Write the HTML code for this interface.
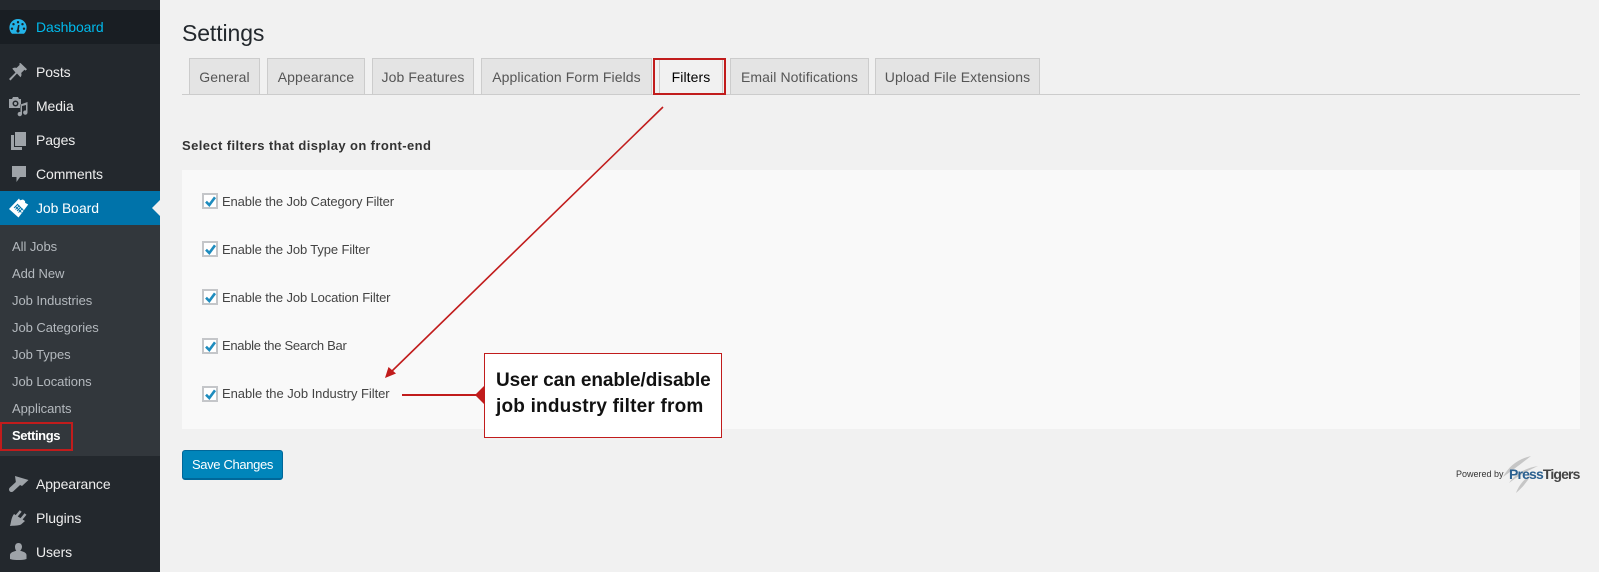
<!DOCTYPE html>
<html><head><meta charset="utf-8"><style>
*{box-sizing:border-box}
html,body{margin:0;padding:0;width:1599px;height:572px;overflow:hidden;background:#f1f1f1;font-family:"Liberation Sans",sans-serif}
.a{position:absolute;white-space:nowrap}
.m{left:36px;font-size:14px;color:#eee;line-height:20px;letter-spacing:-.1px}
.s{left:12px;font-size:13px;color:#b4b9be;line-height:18px;letter-spacing:-.05px}
.t{top:58px;height:36px;background:#e4e4e4;border:1px solid #ccc;border-bottom:none;color:#555;font-size:14px;font-weight:400;line-height:36px;text-align:center;letter-spacing:.1px}
.c{left:202px;width:16px;height:16px;background:#fff;border:2px solid #c4c6c9}
.l{left:222px;font-size:13px;color:#444;line-height:18px;letter-spacing:-.12px}
svg{position:absolute;overflow:visible}
</style></head><body>
<div class="a" style="left:0;top:0;width:160px;height:572px;background:#23282d"></div>
<div class="a" style="left:0;top:10px;width:160px;height:34px;background:#191e23"></div>
<div class="a" style="left:0;top:191px;width:160px;height:34px;background:#0073aa"></div>
<div class="a" style="left:0;top:225px;width:160px;height:231px;background:#32373c"></div>
<div class="a" style="left:152px;top:200px;width:0;height:0;border:8px solid transparent;border-right-color:#f1f1f1;border-left:none"></div>

<svg style="left:9px;top:18px" width="18" height="18" viewBox="0 0 18 18"><path fill="#23b3e8" fill-rule="evenodd" d="M9 1a8.6 8.6 0 0 0-8.6 8.6c0 2.4 1 4.600 2.600 6.200h12c1.600-1.600 2.600-3.800 2.600-6.200A8.600 8.600 0 0 0 9 1zM9 3a1.200 1.200 0 1 1 0 2.400A1.200 1.200 0 0 1 9 3zM4.500 5a1.200 1.200 0 1 1 0 2.400 1.200 1.200 0 0 1 0-2.400zM13.500 5a1.200 1.200 0 1 1 0 2.400 1.200 1.200 0 0 1 0-2.400zM3 9.500a1.200 1.200 0 1 1 0 2.400 1.200 1.200 0 0 1 0-2.400zM15 9.500a1.200 1.200 0 1 1 0 2.400 1.200 1.200 0 0 1 0-2.400zM10.500 7l-.6 4.800a1.500 1.500 0 1 1-1.800 0L9 7z"/></svg>
<div class="a m" style="top:17px;color:#00b9eb">Dashboard</div>

<svg style="left:9px;top:63px" width="18" height="18" viewBox="0 0 18 18"><path fill="#9ea3a8" d="M11.500 0l6.500 6.300-1.500 1.300-1-.8-3.300 3.200c.6 1.500.3 3.100-.7 4.200L8 10.500 1.500 17.500 0 16l6.500-6.500-3.200-3.900c1.200-1.100 2.900-1.300 4.300-.7l3.200-3.200-.8-1z"/></svg>
<div class="a m" style="top:62px">Posts</div>

<svg style="left:9px;top:97px" width="19" height="19" viewBox="0 0 19 19"><path fill="#9ea3a8" fill-rule="evenodd" d="M0 2h3l1-2h5l1 2h2v9H0zM6.500 3.500a3 3 0 1 0 0 6 3 3 0 0 0 0-6zM18.500 5v10.500a2.200 2.200 0 1 1-1.500-2V8l-4 1v8a2.200 2.200 0 1 1-1.500-2v-7.500zM6.500 5a1.500 1.500 0 1 1 0 3 1.500 1.500 0 0 1 0-3z"/></svg>
<div class="a m" style="top:96px">Media</div>

<svg style="left:11px;top:132px" width="16" height="18" viewBox="0 0 16 18"><path fill="#9ea3a8" d="M4 0h11v14H4zM0 3h3v12h8v3H0z"/></svg>
<div class="a m" style="top:130px">Pages</div>

<svg style="left:11px;top:166px" width="16" height="16" viewBox="0 0 16 16"><path fill="#9ea3a8" d="M1 0h14v11h-6l-3.500 5v-5H1z"/></svg>
<div class="a m" style="top:164px">Comments</div>

<svg style="left:9px;top:198px" width="20" height="20" viewBox="0 0 20 20"><path fill="#fff" d="M10 .5l1 1.800 3-.8 2 1.500.2 1.900 3 1.600L9.500 19.500 0 11z"/><path stroke="#0073aa" stroke-width=".9" fill="none" d="M5 10l4-4M6.500 11.500l4-4M8 13l4-4M9.500 14.500l4-4M6.500 8.500l6 6M8.500 6.500l6 6"/></svg>
<div class="a m" style="top:198px;color:#fff">Job Board</div>

<div class="a s" style="top:238px">All Jobs</div>
<div class="a s" style="top:265px">Add New</div>
<div class="a s" style="top:292px">Job Industries</div>
<div class="a s" style="top:319px">Job Categories</div>
<div class="a s" style="top:346px">Job Types</div>
<div class="a s" style="top:373px">Job Locations</div>
<div class="a s" style="top:400px">Applicants</div>
<div class="a s" style="top:427px;color:#fff;font-weight:700;letter-spacing:-.4px">Settings</div>
<div class="a" style="left:0;top:422px;width:73px;height:29px;border:2px solid #c11c1c"></div>

<svg style="left:9px;top:475px" width="20" height="17" viewBox="0 0 20 17"><path fill="#9ea3a8" d="M6 1l13.500 4-6.500 6-6-3z"/><path stroke="#9ea3a8" stroke-width="5" stroke-linecap="round" d="M9 8.500L2.500 14.500"/></svg>
<div class="a m" style="top:474px">Appearance</div>

<svg style="left:10px;top:510px" width="17" height="17" viewBox="0 0 17 17"><path fill="#9ea3a8" d="M4 4L15 11 11 14.500C8 16 3 15.500 0 16 1 13 1 8 4 4z"/><path stroke="#9ea3a8" stroke-width="2.500" d="M6.500 6L10.700 1M11 9.500L15.500 4"/></svg>
<div class="a m" style="top:508px">Plugins</div>

<svg style="left:10px;top:543px" width="17" height="17" viewBox="0 0 17 17"><path fill="#9ea3a8" d="M8.500 0c2.200 0 3.500 1.700 3.500 3.800 0 1.800-1 3.200-1.800 4 2.500.6 6.300 1.800 6.300 4.200V16c-3 1-5.500 1-8 1s-5.500 0-8.500-1v-4c0-2.400 3.800-3.600 6.300-4.200C5.500 7 5 5.600 5 3.800 5 1.700 6.300 0 8.500 0z"/></svg>
<div class="a m" style="top:542px">Users</div>

<div class="a" style="left:182px;top:19px;font-size:23px;line-height:28px;color:#23282d;letter-spacing:-.1px">Settings</div>

<div class="a" style="left:182px;top:94px;width:1398px;height:1px;background:#ccc"></div>
<div class="a t" style="left:189px;width:71px">General</div>
<div class="a t" style="left:267px;width:98px">Appearance</div>
<div class="a t" style="left:372px;width:102px">Job Features</div>
<div class="a t" style="left:481px;width:171px">Application Form Fields</div>
<div class="a t" style="left:659px;width:64px;height:37px;background:#f1f1f1;color:#000">Filters</div>
<div class="a t" style="left:730px;width:139px">Email Notifications</div>
<div class="a t" style="left:875px;width:165px">Upload File Extensions</div>
<div class="a" style="left:653px;top:58px;width:73px;height:37px;border:2px solid #c11c1c"></div>

<div class="a" style="left:182px;top:137px;font-size:13px;font-weight:700;line-height:18px;color:#333;letter-spacing:.4px">Select filters that display on front-end</div>

<div class="a" style="left:182px;top:170px;width:1398px;height:259px;background:#f9f9f9"></div>

<div class="a c" style="top:193px"></div><svg style="left:203px;top:194px" width="14" height="14" viewBox="0 0 14 14"><path fill="none" stroke="#1e8cbe" stroke-width="2.600" d="M3 7.700L6.300 11 12 3.300"/></svg>
<div class="a l" style="top:193px">Enable the Job Category Filter</div>
<div class="a c" style="top:241px"></div><svg style="left:203px;top:242px" width="14" height="14" viewBox="0 0 14 14"><path fill="none" stroke="#1e8cbe" stroke-width="2.600" d="M3 7.700L6.300 11 12 3.300"/></svg>
<div class="a l" style="top:241px">Enable the Job Type Filter</div>
<div class="a c" style="top:289px"></div><svg style="left:203px;top:290px" width="14" height="14" viewBox="0 0 14 14"><path fill="none" stroke="#1e8cbe" stroke-width="2.600" d="M3 7.700L6.300 11 12 3.300"/></svg>
<div class="a l" style="top:289px">Enable the Job Location Filter</div>
<div class="a c" style="top:338px"></div><svg style="left:203px;top:339px" width="14" height="14" viewBox="0 0 14 14"><path fill="none" stroke="#1e8cbe" stroke-width="2.600" d="M3 7.700L6.300 11 12 3.300"/></svg>
<div class="a l" style="top:337px;letter-spacing:-.3px">Enable the Search Bar</div>
<div class="a c" style="top:386px"></div><svg style="left:203px;top:387px" width="14" height="14" viewBox="0 0 14 14"><path fill="none" stroke="#1e8cbe" stroke-width="2.600" d="M3 7.700L6.300 11 12 3.300"/></svg>
<div class="a l" style="top:385px;letter-spacing:-.05px">Enable the Job Industry Filter</div>

<svg style="left:0;top:0" width="1599" height="572"><path fill="none" stroke="#c11c1c" stroke-width="1.600" d="M663 107L391 372"/><path fill="#c11c1c" d="M385 378l3.500-11 3.500 3 4 3.500z"/><path stroke="#c11c1c" stroke-width="2" d="M402 395h76"/><path fill="#c11c1c" d="M475 395l10-10v20z"/></svg>

<div class="a" style="left:484px;top:353px;width:238px;height:85px;background:#fff;border:1px solid #c11c1c"></div>
<div class="a" style="left:496px;top:368px;font-size:19px;font-weight:700;line-height:26px;color:#111;letter-spacing:-.08px">User can enable/disable<br><span style="letter-spacing:.2px">job industry filter from</span></div>

<div class="a" style="left:182px;top:450px;width:101px;height:30px;background:#0085ba;border:1px solid #006799;border-bottom:2px solid #006799;border-radius:3px;color:#fff;font-size:13px;line-height:28px;text-align:center;letter-spacing:-.35px">Save Changes</div>

<svg style="left:1500px;top:455px" width="50" height="40" viewBox="0 0 50 40"><path fill="#c6c6c6" d="M3 22C9 11 18 4 31 1 22 8 13 15 3 22zM9 28c7-10 17-15 29-17C27 16 18 21 9 28zM16 38c3-8 8-14 15-18C27 27 22 33 16 38z"/></svg>
<div class="a" style="left:1456px;top:468px;font-size:9px;line-height:12px;color:#333">Powered by</div>
<div class="a" style="left:1509px;top:465px;font-size:14px;font-weight:700;line-height:18px;color:#2a5f8f;letter-spacing:-.85px">Press<span style="color:#444">Tigers</span></div>
</body></html>
